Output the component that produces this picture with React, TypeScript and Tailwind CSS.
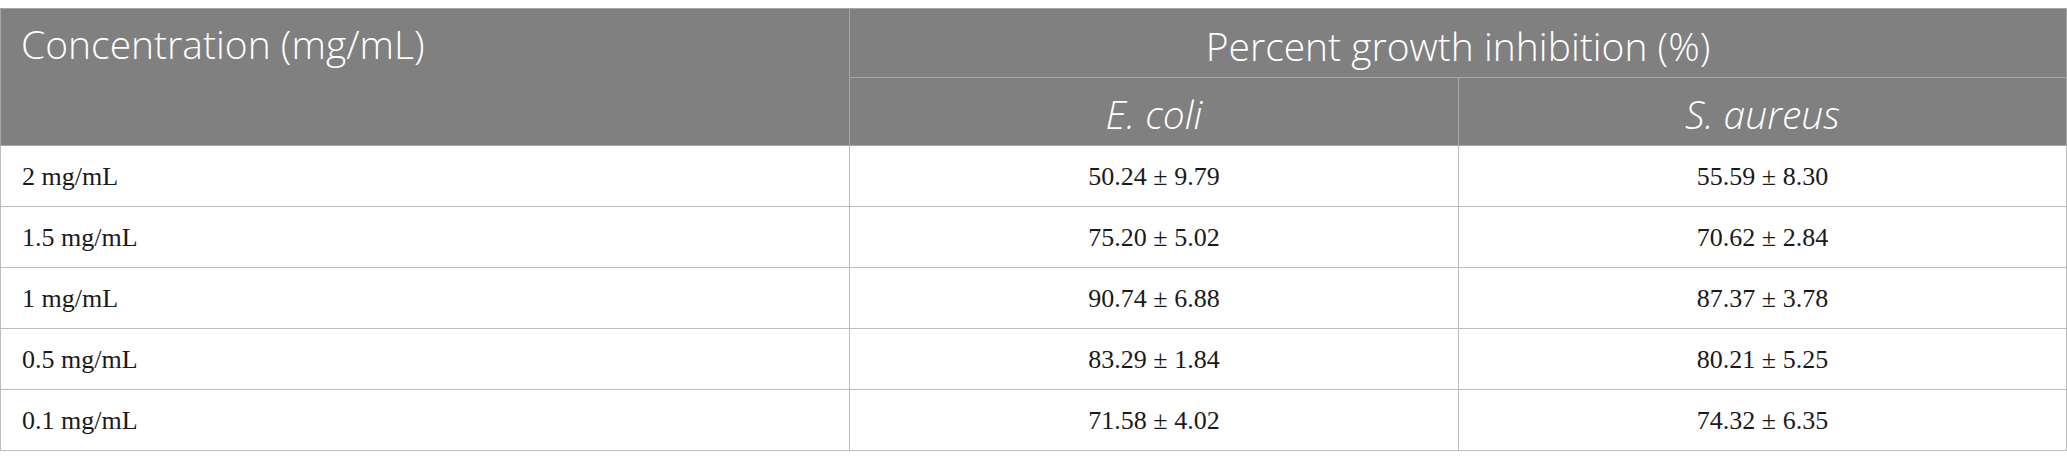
const rows = [
  { conc: '2 mg/mL', ecoli: '50.24 ± 9.79', saureus: '55.59 ± 8.30' },
  { conc: '1.5 mg/mL', ecoli: '75.20 ± 5.02', saureus: '70.62 ± 2.84' },
  { conc: '1 mg/mL', ecoli: '90.74 ± 6.88', saureus: '87.37 ± 3.78' },
  { conc: '0.5 mg/mL', ecoli: '83.29 ± 1.84', saureus: '80.21 ± 5.25' },
  { conc: '0.1 mg/mL', ecoli: '71.58 ± 4.02', saureus: '74.32 ± 6.35' },
];

export default function App() {
  return (
    <div className="w-[2067px] h-[471px] bg-white pt-[8px]">
      <table className="w-[2066px] table-fixed border-collapse">
        <colgroup>
          <col className="w-[849px]" />
          <col className="w-[609px]" />
          <col className="w-[608px]" />
        </colgroup>
        <thead className="bg-[#7f807f] text-white font-['Open_Sans',sans-serif] font-light text-[39px]">
          <tr className="h-[69px]">
            <th
              rowSpan={2}
              className="border border-[#a6a6a6] px-[20px] pt-[12px] text-left align-top font-light leading-[45px]"
            >
              Concentration (mg/mL)
            </th>
            <th colSpan={2} className="border border-[#a6a6a6] pt-[4px] text-center font-light leading-[45px]">
              Percent growth inhibition (%)
            </th>
          </tr>
          <tr className="h-[68px]">
            <th className="border border-[#a6a6a6] pt-[4px] text-center italic font-light leading-[45px]">E. coli</th>
            <th className="border border-[#a6a6a6] pt-[4px] text-center italic font-light leading-[45px]">S. aureus</th>
          </tr>
        </thead>
        <tbody className="font-['Liberation_Serif',serif] text-[26px] text-[#1a1a1a]">
          {rows.map(r => (
            <tr key={r.conc} className="h-[61px]">
              <td className="border border-[#bcbcbc] px-[21px]">{r.conc}</td>
              <td className="border border-[#bcbcbc] text-center">{r.ecoli}</td>
              <td className="border border-[#bcbcbc] text-center">{r.saureus}</td>
            </tr>
          ))}
        </tbody>
      </table>
    </div>
  );
}
